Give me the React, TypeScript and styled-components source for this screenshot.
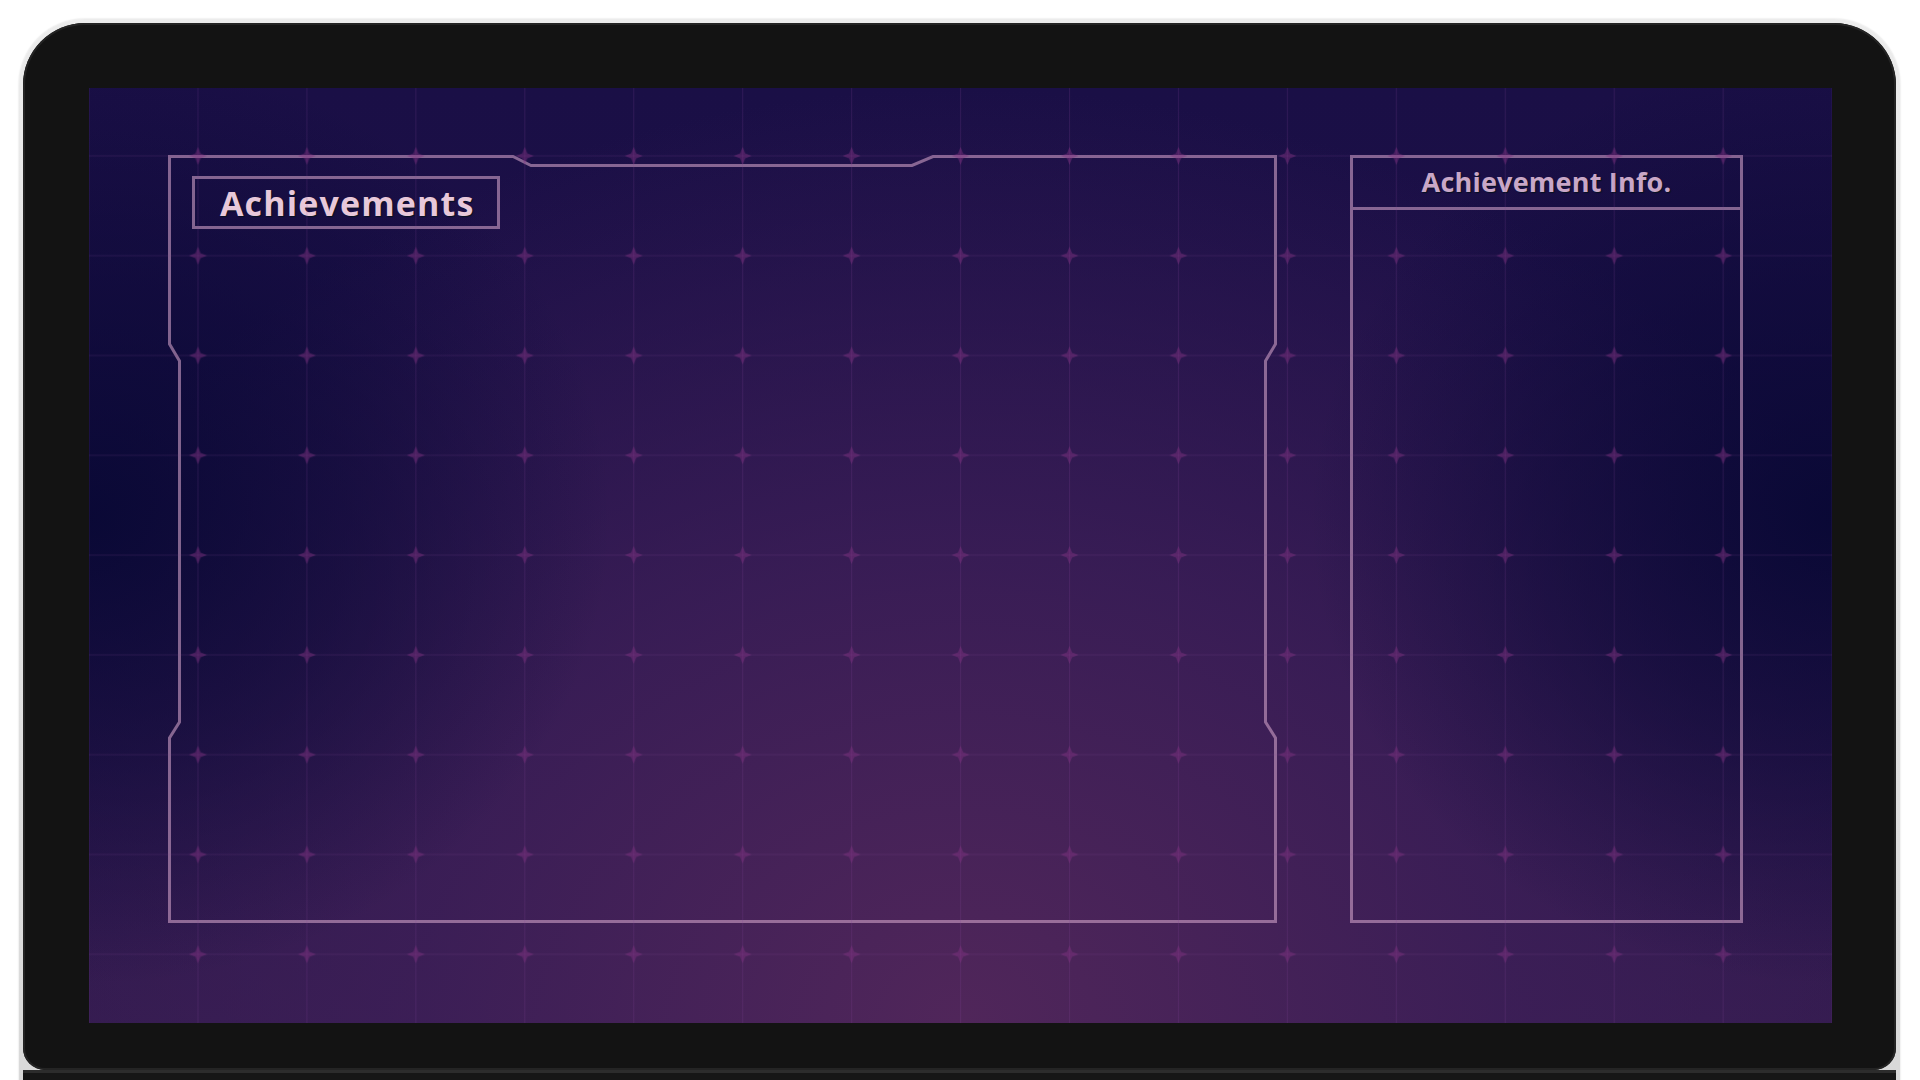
import styled, { createGlobalStyle } from 'styled-components'

const stroke = 'rgba(207, 160, 199, 0.6)'

const GlobalStyle = createGlobalStyle`
  html, body {
    margin: 0;
    padding: 0;
    background: #ffffff;
    overflow: hidden;
  }
  body {
    font-family: 'Open Sans', 'Noto Sans', 'Liberation Sans', sans-serif;
  }
`

const Page = styled.div`
  width: 1920px;
  height: 1080px;
  padding: 19px 0 0 19px;
  box-sizing: border-box;
  overflow: hidden;
`

const Laptop = styled.div`
  width: 1881px;
  height: 1100px;
  padding: 4px 4px 0 4px;
  box-sizing: border-box;
  border-radius: 66px 66px 0 0;
  background: linear-gradient(180deg, #ececec 0%, #d8d8d8 100%);
  box-shadow: 0 0 2px rgba(0, 0, 0, 0.18);
`

const Bezel = styled.div`
  padding: 65px 64px 47px 66px;
  border-radius: 62px 62px 22px 22px;
  background: #131313;
  box-shadow: inset 0 0 0 2px #242424;
`

const Hinge = styled.div`
  height: 20px;
  border-top: 3px solid #2c2c2c;
  background: #161616;
`

const Screen = styled.main`
  position: relative;
  width: 1743px;
  height: 935px;
  box-sizing: border-box;
  padding: 67px 89px 100px 79px;
  display: flex;
  gap: 73px;
  overflow: hidden;
  background:
    radial-gradient(ellipse 30% 50% at 0% 46%, rgba(8, 8, 52, 0.92) 0%, rgba(8, 8, 52, 0.5) 50%, rgba(8, 8, 52, 0) 100%),
    radial-gradient(ellipse 30% 50% at 100% 46%, rgba(8, 8, 52, 0.92) 0%, rgba(8, 8, 52, 0.5) 50%, rgba(8, 8, 52, 0) 100%),
    radial-gradient(ellipse 62% 100% at 50% 100%, rgba(80, 38, 90, 1) 0%, rgba(62, 31, 88, 0.8) 50%, rgba(40, 20, 75, 0) 100%),
    linear-gradient(180deg, #1a0f46 0%, #1e1048 45%, #321b4e 100%);
`

const GridLayer = styled.svg`
  position: absolute;
  inset: 0;
  width: 100%;
  height: 100%;
  pointer-events: none;
  z-index: 2;
`

const MainFrame = styled.section`
  position: relative;
  flex: 1;
  padding: 21px 0 0 24px;
`

const FrameOutline = styled.svg`
  position: absolute;
  inset: 0;
  width: 100%;
  height: 100%;
  overflow: visible;
`

const TitleBox = styled.div`
  position: relative;
  width: 308px;
  height: 53px;
  box-sizing: border-box;
  border: 3px solid ${stroke};
  padding-left: 25px;
  display: flex;
  align-items: center;
`

const Title = styled.h1<{ $size: number; $color: string; $spacing: number }>`
  margin: 0;
  font-size: ${(p) => p.$size}px;
  font-weight: 700;
  letter-spacing: ${(p) => p.$spacing}em;
  line-height: 1;
  color: ${(p) => p.$color};
  text-shadow: 1px 1px 1px rgba(4, 18, 28, 0.9);
`

const SidePanel = styled.aside`
  width: 393px;
  box-sizing: border-box;
  border: 3px solid ${stroke};
  display: flex;
  flex-direction: column;
`

const SideHeader = styled.div`
  height: 52px;
  box-sizing: border-box;
  border-bottom: 3px solid ${stroke};
  display: flex;
  align-items: center;
  justify-content: center;
  padding-bottom: 2px;
`

const SideBody = styled.div`
  flex: 1;
`

const Grid = () => (
  <GridLayer>
    <defs>
      <pattern id='hud-lines' x='54.5' y='18' width='108.94' height='99.8' patternUnits='userSpaceOnUse'>
        <line x1='54.5' y1='0' x2='54.5' y2='99.8' stroke='rgba(130, 64, 150, 0.2)' strokeWidth='1' />
        <line x1='0' y1='50' x2='108.94' y2='50' stroke='rgba(130, 64, 150, 0.2)' strokeWidth='1' />
      </pattern>
      <pattern id='hud-stars' x='54.5' y='18' width='108.94' height='99.8' patternUnits='userSpaceOnUse'>
        <path
          d='M54.5 41 L57 47.5 L63.5 50 L57 52.5 L54.5 59 L52 52.5 L45.5 50 L52 47.5 Z'
          fill='rgba(128, 48, 128, 0.45)'
        />
      </pattern>
    </defs>
    <rect width='100%' height='100%' fill='url(#hud-lines)' />
    <rect x='20' y='0' width='1703' height='935' fill='url(#hud-stars)' />
  </GridLayer>
)

const Outline = () => (
  <FrameOutline viewBox='0 0 1109 768' preserveAspectRatio='none'>
    <path
      d='M1.5 1.5 H345 L363 10.5 H744 L765 1.5 H1107.5 V189 L1097.5 206 V567 L1107.5 583 V766.5 H1.5 V583 L11.5 567 V206 L1.5 189 Z'
      fill='none'
      stroke={stroke}
      strokeWidth='3'
    />
  </FrameOutline>
)

export default function App() {
  return (
    <Page>
      <GlobalStyle />
      <Laptop>
        <Bezel>
          <Screen>
            <MainFrame>
              <Outline />
              <TitleBox>
                <Title $size={34} $color='#e8c8da' $spacing={0.034}>
                  Achievements
                </Title>
              </TitleBox>
            </MainFrame>
            <SidePanel>
              <SideHeader>
                <Title as='h2' $size={27} $color='#c9a7c7' $spacing={0.008}>
                  Achievement Info.
                </Title>
              </SideHeader>
              <SideBody />
            </SidePanel>
            <Grid />
          </Screen>
        </Bezel>
        <Hinge />
      </Laptop>
    </Page>
  )
}
